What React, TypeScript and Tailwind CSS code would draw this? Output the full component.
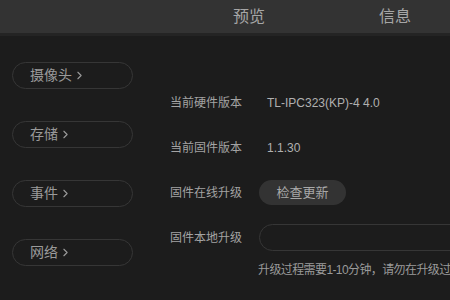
import { ChevronRight } from "lucide-react";

const font = { fontFamily: '"Liberation Sans", "Noto Sans CJK SC", sans-serif' };

const menuItems = ["摄像头", "存储", "事件", "网络"];

function Row({ label, children }: { label: string; children: React.ReactNode }) {
  return (
    <div className="flex h-[45px] items-center">
      <span className="w-[89px] shrink-0 text-[12px] text-[#a3a3a3]">{label}</span>
      <div className="flex min-w-0 flex-1 items-center">{children}</div>
    </div>
  );
}

export default function App() {
  return (
    <div className="h-[300px] w-[450px] overflow-hidden bg-[#1c1c1c]" style={font}>
      <div className="flex h-[33px] items-center bg-[#333333] pl-[233px] text-[16px] text-[#a6a6a6]">
        <span>预览</span>
        <span className="ml-[114px]">信息</span>
      </div>
      <div className="h-[3px] bg-[#242424]" />

      <div className="flex">
        <div className="flex w-[158px] shrink-0 flex-col gap-[32px] pl-[12px] pt-[26px]">
          {menuItems.map((item) => (
            <div
              key={item}
              className="flex h-[27px] w-[121px] items-center rounded-full border border-[#363636] pl-[17px] text-[14px] text-[#9a9a9a]"
            >
              <span>{item}</span>
              <ChevronRight className="ml-[1px] h-[13px] w-[13px]" strokeWidth={2} />
            </div>
          ))}
        </div>

        <div className="min-w-0 flex-1 pl-[12px] pt-[44px]">
          <Row label="当前硬件版本">
            <span className="pl-[8px] text-[12px] text-[#b0b0b0]">TL-IPC323(KP)-4 4.0</span>
          </Row>
          <Row label="当前固件版本">
            <span className="pl-[8px] text-[12px] text-[#b0b0b0]">1.1.30</span>
          </Row>
          <Row label="固件在线升级">
            <button
              type="button"
              className="h-[25px] w-[87px] rounded-full bg-[#333333] text-[13px] text-[#a8a8a8]"
            >
              检查更新
            </button>
          </Row>
          <Row label="固件本地升级">
            <div className="h-[27px] w-[220px] shrink-0 rounded-full border border-[#363636]" />
          </Row>
          <div className="whitespace-nowrap pl-[88px] text-[12px] leading-[20px] tracking-[-0.6px] text-[#9a9a9a]">
            升级过程需要1-10分钟，请勿在升级过程中断电
          </div>
        </div>
      </div>
    </div>
  );
}
